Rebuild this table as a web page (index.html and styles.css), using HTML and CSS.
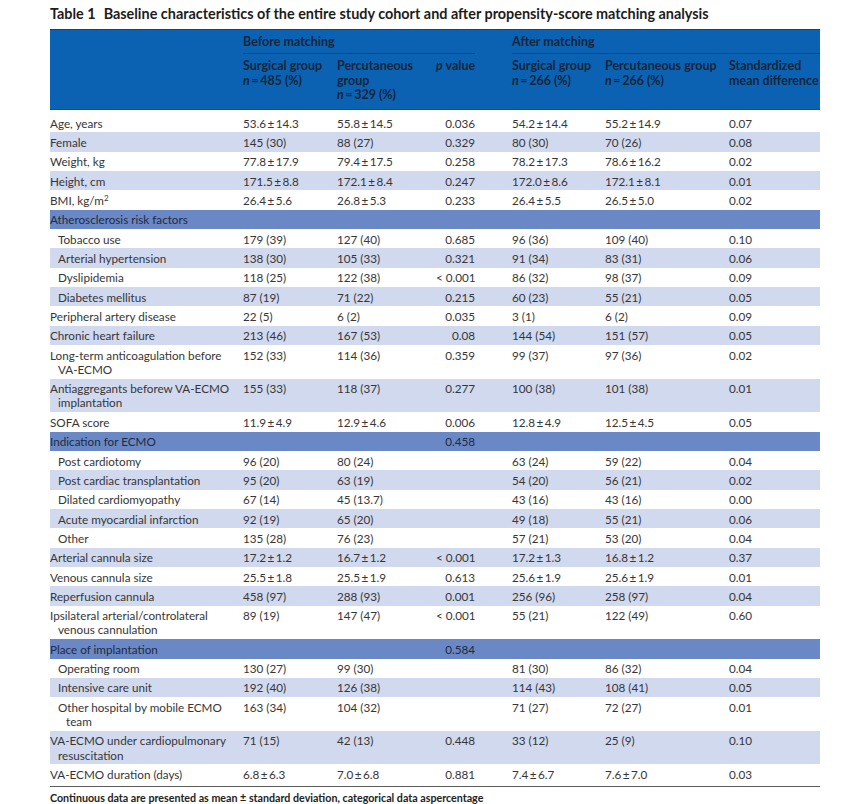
FILE: index.html
```html
<!DOCTYPE html>
<html lang="en">
<head>
<meta charset="utf-8">
<title>Table 1</title>
<link rel="stylesheet" href="styles.css">
</head>
<body>
<div class="page">
  <h1 class="title"><span class="tno">Table 1</span>Baseline characteristics of the entire study cohort and after propensity-score matching analysis</h1>
  <div class="table">
    <div class="thead">
      <div class="grow">
        <div class="gh before">Before matching</div>
        <div class="gh after">After matching</div>
      </div>
      <div class="srow">
        <div class="sh"></div>
        <div class="sh">Surgical group<br><i>n</i>&#8201;=&#8201;485 (%)</div>
        <div class="sh">Percutaneous<br>group<br><i>n</i>&#8201;=&#8201;329 (%)</div>
        <div class="sh pv"><i>p</i> value</div>
        <div class="sh">Surgical group<br><i>n</i>&#8201;=&#8201;266 (%)</div>
        <div class="sh">Percutaneous group<br><i>n</i>&#8201;=&#8201;266 (%)</div>
        <div class="sh">Standardized<br>mean difference</div>
      </div>
    </div>
    <div class="tbody">
      <div class="row"><div class="lb">Age, years</div><div>53.6&#8201;±&#8201;14.3</div><div>55.8&#8201;±&#8201;14.5</div><div class="pv">0.036</div><div>54.2&#8201;±&#8201;14.4</div><div>55.2&#8201;±&#8201;14.9</div><div>0.07</div></div>
      <div class="row alt"><div class="lb">Female</div><div>145 (30)</div><div>88 (27)</div><div class="pv">0.329</div><div>80 (30)</div><div>70 (26)</div><div>0.08</div></div>
      <div class="row"><div class="lb">Weight, kg</div><div>77.8&#8201;±&#8201;17.9</div><div>79.4&#8201;±&#8201;17.5</div><div class="pv">0.258</div><div>78.2&#8201;±&#8201;17.3</div><div>78.6&#8201;±&#8201;16.2</div><div>0.02</div></div>
      <div class="row alt"><div class="lb">Height, cm</div><div>171.5&#8201;±&#8201;8.8</div><div>172.1&#8201;±&#8201;8.4</div><div class="pv">0.247</div><div>172.0&#8201;±&#8201;8.6</div><div>172.1&#8201;±&#8201;8.1</div><div>0.01</div></div>
      <div class="row"><div class="lb">BMI, kg/m<sup>2</sup></div><div>26.4&#8201;±&#8201;5.6</div><div>26.8&#8201;±&#8201;5.3</div><div class="pv">0.233</div><div>26.4&#8201;±&#8201;5.5</div><div>26.5&#8201;±&#8201;5.0</div><div>0.02</div></div>
      <div class="row sec"><div class="lb">Atherosclerosis risk factors</div><div></div><div></div><div class="pv"></div><div></div><div></div><div></div></div>
      <div class="row"><div class="lb sub">Tobacco use</div><div>179 (39)</div><div>127 (40)</div><div class="pv">0.685</div><div>96 (36)</div><div>109 (40)</div><div>0.10</div></div>
      <div class="row alt"><div class="lb sub">Arterial hypertension</div><div>138 (30)</div><div>105 (33)</div><div class="pv">0.321</div><div>91 (34)</div><div>83 (31)</div><div>0.06</div></div>
      <div class="row"><div class="lb sub">Dyslipidemia</div><div>118 (25)</div><div>122 (38)</div><div class="pv">&lt; 0.001</div><div>86 (32)</div><div>98 (37)</div><div>0.09</div></div>
      <div class="row alt"><div class="lb sub">Diabetes mellitus</div><div>87 (19)</div><div>71 (22)</div><div class="pv">0.215</div><div>60 (23)</div><div>55 (21)</div><div>0.05</div></div>
      <div class="row"><div class="lb">Peripheral artery disease</div><div>22 (5)</div><div>6 (2)</div><div class="pv">0.035</div><div>3 (1)</div><div>6 (2)</div><div>0.09</div></div>
      <div class="row alt"><div class="lb">Chronic heart failure</div><div>213 (46)</div><div>167 (53)</div><div class="pv">0.08</div><div>144 (54)</div><div>151 (57)</div><div>0.05</div></div>
      <div class="row"><div class="lb">Long-term anticoagulation before<br>VA-ECMO</div><div>152 (33)</div><div>114 (36)</div><div class="pv">0.359</div><div>99 (37)</div><div>97 (36)</div><div>0.02</div></div>
      <div class="row alt"><div class="lb">Antiaggregants beforew VA-ECMO<br>implantation</div><div>155 (33)</div><div>118 (37)</div><div class="pv">0.277</div><div>100 (38)</div><div>101 (38)</div><div>0.01</div></div>
      <div class="row"><div class="lb">SOFA score</div><div>11.9&#8201;±&#8201;4.9</div><div>12.9&#8201;±&#8201;4.6</div><div class="pv">0.006</div><div>12.8&#8201;±&#8201;4.9</div><div>12.5&#8201;±&#8201;4.5</div><div>0.05</div></div>
      <div class="row sec"><div class="lb">Indication for ECMO</div><div></div><div></div><div class="pv">0.458</div><div></div><div></div><div></div></div>
      <div class="row"><div class="lb sub">Post cardiotomy</div><div>96 (20)</div><div>80 (24)</div><div class="pv"></div><div>63 (24)</div><div>59 (22)</div><div>0.04</div></div>
      <div class="row alt"><div class="lb sub">Post cardiac transplantation</div><div>95 (20)</div><div>63 (19)</div><div class="pv"></div><div>54 (20)</div><div>56 (21)</div><div>0.02</div></div>
      <div class="row"><div class="lb sub">Dilated cardiomyopathy</div><div>67 (14)</div><div>45 (13.7)</div><div class="pv"></div><div>43 (16)</div><div>43 (16)</div><div>0.00</div></div>
      <div class="row alt"><div class="lb sub">Acute myocardial infarction</div><div>92 (19)</div><div>65 (20)</div><div class="pv"></div><div>49 (18)</div><div>55 (21)</div><div>0.06</div></div>
      <div class="row"><div class="lb sub">Other</div><div>135 (28)</div><div>76 (23)</div><div class="pv"></div><div>57 (21)</div><div>53 (20)</div><div>0.04</div></div>
      <div class="row alt"><div class="lb">Arterial cannula size</div><div>17.2&#8201;±&#8201;1.2</div><div>16.7&#8201;±&#8201;1.2</div><div class="pv">&lt; 0.001</div><div>17.2&#8201;±&#8201;1.3</div><div>16.8&#8201;±&#8201;1.2</div><div>0.37</div></div>
      <div class="row"><div class="lb">Venous cannula size</div><div>25.5&#8201;±&#8201;1.8</div><div>25.5&#8201;±&#8201;1.9</div><div class="pv">0.613</div><div>25.6&#8201;±&#8201;1.9</div><div>25.6&#8201;±&#8201;1.9</div><div>0.01</div></div>
      <div class="row alt"><div class="lb">Reperfusion cannula</div><div>458 (97)</div><div>288 (93)</div><div class="pv">0.001</div><div>256 (96)</div><div>258 (97)</div><div>0.04</div></div>
      <div class="row"><div class="lb">Ipsilateral arterial/controlateral<br>venous cannulation</div><div>89 (19)</div><div>147 (47)</div><div class="pv">&lt; 0.001</div><div>55 (21)</div><div>122 (49)</div><div>0.60</div></div>
      <div class="row sec"><div class="lb">Place of implantation</div><div></div><div></div><div class="pv">0.584</div><div></div><div></div><div></div></div>
      <div class="row"><div class="lb sub">Operating room</div><div>130 (27)</div><div>99 (30)</div><div class="pv"></div><div>81 (30)</div><div>86 (32)</div><div>0.04</div></div>
      <div class="row alt"><div class="lb sub">Intensive care unit</div><div>192 (40)</div><div>126 (38)</div><div class="pv"></div><div>114 (43)</div><div>108 (41)</div><div>0.05</div></div>
      <div class="row"><div class="lb sub">Other hospital by mobile ECMO<br>team</div><div>163 (34)</div><div>104 (32)</div><div class="pv"></div><div>71 (27)</div><div>72 (27)</div><div>0.01</div></div>
      <div class="row alt"><div class="lb">VA-ECMO under cardiopulmonary<br>resuscitation</div><div>71 (15)</div><div>42 (13)</div><div class="pv">0.448</div><div>33 (12)</div><div>25 (9)</div><div>0.10</div></div>
      <div class="row last"><div class="lb">VA-ECMO duration (days)</div><div>6.8&#8201;±&#8201;6.3</div><div>7.0&#8201;±&#8201;6.8</div><div class="pv">0.881</div><div>7.4&#8201;±&#8201;6.7</div><div>7.6&#8201;±&#8201;7.0</div><div>0.03</div></div>
    </div>
  </div>
  <p class="foot">Continuous data are presented as mean ± standard deviation, categorical data aspercentage</p>
</div>
</body>
</html>
```

FILE: styles.css
```css
html, body {
  margin: 0;
  padding: 0;
  background: #ffffff;
}

.page {
  width: 865px;
  height: 804px;
  overflow: hidden;
  font-family: "Lato", "Liberation Sans", sans-serif;
  color: #363636;
}

.title {
  margin: 0;
  padding: 6px 0 0 50px;
  height: 23px;
  box-sizing: border-box;
  font-size: 14.4px;
  line-height: 16px;
  font-weight: 700;
  color: #1c1c1c;
  white-space: nowrap;
}

.tno {
  margin-right: 8px;
}

.table {
  margin-left: 50px;
  width: 770px;
}

.thead {
  background: #0b62b2;
  border-top: 1px solid #22406a;
  border-bottom: 1px solid #1e4c80;
  height: 81px;
  box-sizing: border-box;
  color: #16253a;
  font-weight: 700;
  font-size: 12.5px;
  line-height: 14.5px;
  margin-top: 6px;
}

.grow {
  display: grid;
  grid-template-columns: 193px 232px 37px 308px;
  height: 24px;
  box-sizing: border-box;
}

.gh {
  padding-top: 5px;
  border-bottom: 1px solid #1a3f6c;
  white-space: nowrap;
}

.gh.before {
  grid-column: 2;
}

.gh.after {
  grid-column: 4;
}

.srow,
.row {
  display: grid;
  grid-template-columns: 193px 94px 99px 76px 93px 124px 91px;
}

.srow {
  padding-top: 5px;
}

.sh {
  white-space: nowrap;
}

.srow > .pv,
.row > .pv {
  text-align: right;
  padding-right: 37px;
}

.tbody {
  margin-top: 3px;
  font-size: 11.7px;
  line-height: 14.2px;
}

.row > div {
  padding-top: 2.6px;
  padding-bottom: 2.55px;
  white-space: nowrap;
}

.row.alt {
  background: #d1d9ef;
}

.row.sec {
  background: #6a88c6;
  color: #1f2a40;
}

.row.last {
  border-bottom: 1.5px solid #5c5c5c;
  padding-bottom: 2px;
}

.row > .lb {
  padding-left: 8px;
  text-indent: -8px;
}

.row > .lb.sub {
  padding-left: 16px;
}

sup {
  font-size: 8px;
  line-height: 0;
  vertical-align: 4px;
}

.foot {
  margin: 0;
  padding: 4px 0 0 50px;
  font-size: 10.7px;
  line-height: 14px;
  font-weight: 700;
  color: #222;
  white-space: nowrap;
}
```
